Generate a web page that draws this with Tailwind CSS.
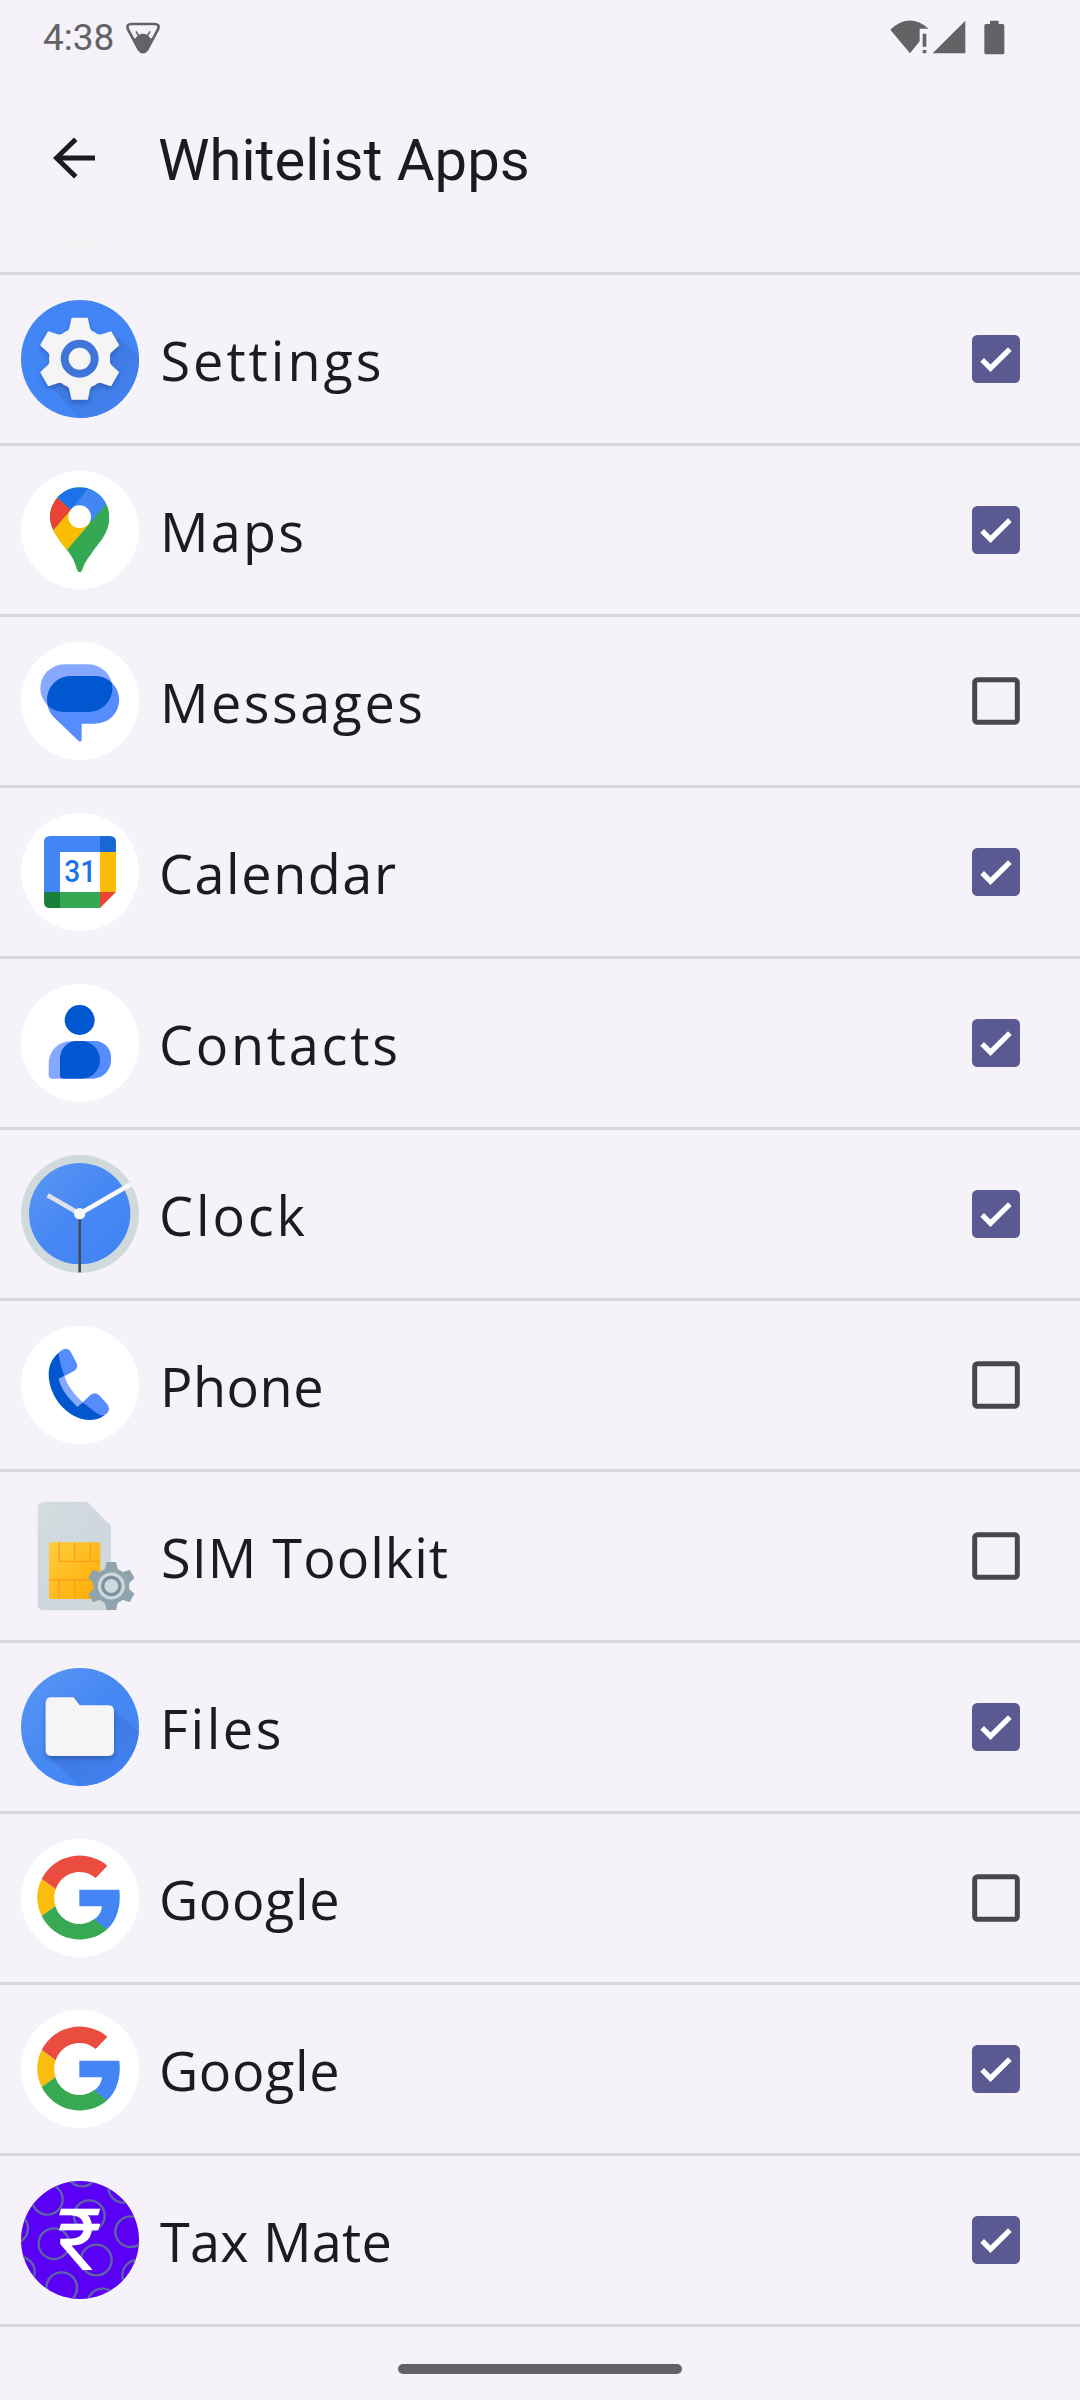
<!DOCTYPE html>
<html lang="en">
<head>
<meta charset="utf-8">
<title>Whitelist Apps</title>
<script src="https://cdn.jsdelivr.net/npm/@tailwindcss/browser@4"></script>
</head>
<body class="w-[1080px] h-[2400px] overflow-hidden bg-[#f5f2fa] font-['Open_Sans',sans-serif] text-[#1c1b21] flex flex-col">

<!-- shared shapes -->
<svg class="absolute size-0">
  <defs>
    <symbol id="on" viewBox="0 0 48 48">
      <rect width="48" height="48" rx="5.5" fill="#5b5992"/>
      <path d="M8.3 26.7 12 23l6.5 6.5L36 12.3l3.7 3.7-21.2 21z" fill="#fff"/>
    </symbol>
    <symbol id="off" viewBox="0 0 48 48">
      <rect x="2.7" y="2.7" width="42.6" height="42.6" rx="2.8" fill="none" stroke="#48464f" stroke-width="5"/>
    </symbol>
    <g id="tooth"><path d="M-25-120Q-25-123-22-123H22Q25-123 25-120L31-92Q34-81 50-77L0 0-50-77Q-34-81-31-92Z"/></g>
    <g id="gear">
      <circle r="91"/>
      <use href="#tooth"/><use href="#tooth" transform="rotate(60)"/><use href="#tooth" transform="rotate(120)"/>
      <use href="#tooth" transform="rotate(180)"/><use href="#tooth" transform="rotate(240)"/><use href="#tooth" transform="rotate(300)"/>
    </g>
    <filter id="drop" x="-20%" y="-20%" width="140%" height="150%"><feDropShadow dx="0" dy="8" stdDeviation="7" flood-color="#1a3a80" flood-opacity=".4"/></filter>
    <linearGradient id="blue" x1="0" y1="0" x2="1" y2="1"><stop offset="0" stop-color="#5a96f6"/><stop offset=".5" stop-color="#4688f3"/><stop offset="1" stop-color="#4083f6"/></linearGradient>
    <linearGradient id="shade" x1="0" y1="0" x2="1" y2="1"><stop offset=".4" stop-color="#3f7ae2"/><stop offset="1" stop-color="#4284f5"/></linearGradient>
    <linearGradient id="chip" x1="0" y1="0" x2="1" y2="1"><stop offset="0" stop-color="#ffcd40"/><stop offset="1" stop-color="#ffab00"/></linearGradient>
    <linearGradient id="card" x1="0" y1="0" x2="1" y2="1"><stop offset="0" stop-color="#d3dcde"/><stop offset=".45" stop-color="#d0d8df"/><stop offset="1" stop-color="#cfd8da"/></linearGradient>
    <clipPath id="pin"><path d="M150 741A89 89 0 0 1 328 741C328 788 300 815 280 842C262 867 254 877 247 899Q239 915 231 899C225 878 219 863 201 840C182 815 150 780 150 741Z"/></clipPath>
    <clipPath id="bubble"><rect x="121" y="163" width="216" height="143" rx="71.5"/></clipPath>
    <clipPath id="bodyClip"><path d="M146 375V340A67 67 0 0 1 213 273H243A57 57 0 0 1 300 330 56 56 0 0 1 244 386H157Q146 386 146 375Z"/></clipPath>
    <clipPath id="disc"><circle cx="240" cy="270" r="177"/></clipPath>
    <clipPath id="discB"><circle cx="240" cy="291" r="177"/></clipPath>
    <clipPath id="discA"><circle cx="240" cy="267" r="177"/></clipPath>
    <symbol id="g" viewBox="63 627 354 354">
      <circle cx="240" cy="804" r="177" fill="#fff"/>
      <path d="M125 747A128 128 0 0 1 322 707L287 744A75 75 0 0 0 167 778Z" fill="#eb4c40"/>
      <path d="M125 747A128 128 0 0 0 125 858L167 829A76 76 0 0 1 167 778Z" fill="#fbbd0d"/>
      <path d="M125 858A128 128 0 0 0 322 898L283 867A75 75 0 0 1 166 829Z" fill="#37a853"/>
      <path d="M238 779H358C364 828 350 873 321 898L282 868C296 860 304 846 306 829H238Z" fill="#4485f5"/>
    </symbol>
  </defs>
</svg>

<header class="h-[272px] shrink-0 relative font-['Roboto',sans-serif]">
  <div class="h-[75px] flex items-center pl-[43px] pr-[75px] text-[#636366]">
    <span class="text-[37px] leading-none">4:38</span>
    <svg class="ml-[12px] mt-px w-[34px] h-[32px]" viewBox="321 38 102 94">
      <path d="M336 43H408Q423 44 417 59L385 119Q372 136 359 119L327 59Q321 44 336 43Z" fill="none" stroke="#636366" stroke-width="8"/>
      <path d="M345 86H350Q356 72 372 72T394 86H399L385 119Q372 136 359 119Z" fill="#636366"/>
      <path d="M351 65 360 80M393 65 384 80" stroke="#636366" stroke-width="5"/>
    </svg>
    <svg class="ml-auto w-[115px] h-[35px]" viewBox="92 58 345 105" fill="#636366">
      <path d="M93 87Q150 34 208 84H181V122L152 158Z"/>
      <path d="M190 99h11v39h-11zM190 148h11v10h-11z"/>
      <path d="M220 158 318 60V158Z"/>
      <path d="M392 60h26v10h12q5 0 5 5v81q0 5-5 5h-50q-5 0-5-5V75q0-5 5-5h12z"/>
    </svg>
  </div>
  <div class="flex items-center h-[165px] pl-[53px]">
    <svg class="w-[42px] h-[42px]" viewBox="0 0 42 42"><path d="M42 18.500V23.500H9.500L24.500 38 21 41.500 0 21 21 .5 24.500 4 9.500 18.500Z" fill="#1c1b21"/></svg>
    <h1 class="ml-[63px] mt-[5px] text-[58px] leading-none">Whitelist Apps</h1>
  </div>
  <div class="absolute left-[57px] top-[242px] w-[46px] h-[5px] rounded-b-[50%] bg-[#f4f4f4]"></div>
</header>

<main class="shrink-0 border-b-3 border-[#d8d5dc] text-[54px] leading-none whitespace-nowrap">
  <div class="flex items-center h-[171px] border-t-3 border-[#d8d5dc] pl-[21px] pr-[60px]">
    <svg class="size-[118px]" viewBox="63 90 354 354">
      <circle cx="240" cy="267" r="177" fill="#4285f5"/>
      <path d="M354 200 430 270V450H245L145 342Z" fill="url(#shade)" clip-path="url(#discA)"/>
      <g filter="url(#drop)"><use href="#gear" transform="translate(239 266)" fill="#f5f5f5"/></g>
      <circle cx="239" cy="266" r="57" fill="#3f74d9"/><circle cx="239" cy="266" r="33" fill="#f5f5f5"/>
    </svg>
    <span class="ml-[21.500px] pt-[2px] tracking-[2.98px]">Settings</span>
    <svg class="ml-auto size-[48px]"><use href="#on"/></svg>
  </div>
  <div class="flex items-center h-[171px] border-t-3 border-[#d8d5dc] pl-[21px] pr-[60px]">
    <svg class="size-[118px]" viewBox="63 603 354 354">
      <circle cx="240" cy="780" r="177" fill="#fff"/>
      <g clip-path="url(#pin)">
        <rect x="140" y="640" width="200" height="280" fill="#34a853"/>
        <path d="M264 655 213 717 239 741 272 757 319 702 350 660V640H270Z" fill="#4285f5"/>
        <path d="M173 685 213 719 264 655V640H160Z" fill="#1a73e8"/>
        <path d="M173 685 213 719 160 781 130 790V680Z" fill="#ea4335"/>
        <path d="M160 781 213 719 272 757 201 840 130 840Z" fill="#fbbc04"/>
      </g>
      <circle cx="239" cy="740" r="34" fill="#fff"/>
    </svg>
    <span class="ml-[21px] pt-[2px] tracking-[2.2px]">Maps</span>
    <svg class="ml-auto size-[48px]"><use href="#on"/></svg>
  </div>
  <div class="flex items-center h-[171px] border-t-3 border-[#d8d5dc] pl-[21px] pr-[60px]">
    <svg class="size-[118px]" viewBox="63 96 354 354">
      <circle cx="240" cy="273" r="177" fill="#fff"/>
      <rect x="121" y="163" width="216" height="143" rx="71.500" fill="#86a9ff"/>
      <path d="M212 198H286A71.500 71.500 0 0 1 286 341H245V390Q242 398 235 392L160 320Q141 300 141 269A71.500 71.500 0 0 1 212 198Z" fill="#578cff"/>
      <g clip-path="url(#bubble)"><rect x="141" y="198" width="216" height="143" rx="71.500" fill="#0057cf"/></g>
    </svg>
    <span class="ml-[21px] pt-[2px] tracking-[2.45px]">Messages</span>
    <svg class="ml-auto size-[48px]"><use href="#off"/></svg>
  </div>
  <div class="flex items-center h-[171px] border-t-3 border-[#d8d5dc] pl-[21px] pr-[60px]">
    <svg class="size-[118px]" viewBox="63 609 354 354">
      <circle cx="240" cy="786" r="177" fill="#fff"/>
      <path d="M150 678H300V726H180V846H132V696Q132 678 150 678Z" fill="#4285f5"/>
      <path d="M300 678H330Q348 678 348 696V726H300Z" fill="#1967d2"/>
      <path d="M300 726H348V846H300Z" fill="#fbbc04"/>
      <path d="M300 846H348L300 894Z" fill="#ea4335"/>
      <path d="M180 846H300V894H180Z" fill="#34a853"/>
      <path d="M132 846H180V894H150Q132 894 132 876Z" fill="#188038"/>
      <text x="193" y="815" font-family="Roboto, sans-serif" font-size="92" font-weight="500" textLength="96" lengthAdjust="spacingAndGlyphs" fill="#1a73e8">31</text>
    </svg>
    <span class="ml-[20px] pt-[2px] tracking-[1.54px]">Calendar</span>
    <svg class="ml-auto size-[48px]"><use href="#on"/></svg>
  </div>
  <div class="flex items-center h-[171px] border-t-3 border-[#d8d5dc] pl-[21px] pr-[60px]">
    <svg class="size-[118px]" viewBox="63 102 354 354">
      <circle cx="240" cy="279" r="177" fill="#fff"/>
      <circle cx="239" cy="210" r="45" fill="#0057cf"/>
      <path d="M146 375V340A67 67 0 0 1 213 273H243A57 57 0 0 1 300 330 56 56 0 0 1 244 386H157Q146 386 146 375Z" fill="#86a9ff"/>
      <path d="M180 375V325A52 52 0 0 1 232 273H285A48 48 0 0 1 333 321V330A56 56 0 0 1 277 386H191Q180 386 180 375Z" fill="#578cff"/>
      <path d="M180 375V325A52 52 0 0 1 232 273H285A48 48 0 0 1 333 321V330A56 56 0 0 1 277 386H191Q180 386 180 375Z" fill="#0057cf" clip-path="url(#bodyClip)"/>
    </svg>
    <span class="ml-[20px] pt-[2px] tracking-[2.75px]">Contacts</span>
    <svg class="ml-auto size-[48px]"><use href="#on"/></svg>
  </div>
  <div class="flex items-center h-[171px] border-t-3 border-[#d8d5dc] pl-[21px] pr-[60px]">
    <svg class="size-[118px]" viewBox="63 615 354 354">
      <circle cx="240" cy="792" r="177" fill="#d0dadd"/>
      <circle cx="239" cy="791" r="152" fill="url(#blue)"/>
      <path d="M239 791 143 736" stroke="#e0e2e6" stroke-width="14"/>
      <path d="M239 791 392 703" stroke="#fafafa" stroke-width="14"/>
      <path d="M239 791V967" stroke="#484c58" stroke-width="8"/>
      <circle cx="239" cy="791" r="17" fill="#fafafa"/>
    </svg>
    <span class="ml-[20px] pt-[2px] tracking-[2.9px]">Clock</span>
    <svg class="ml-auto size-[48px]"><use href="#on"/></svg>
  </div>
  <div class="flex items-center h-[171px] border-t-3 border-[#d8d5dc] pl-[21px] pr-[60px]">
    <svg class="size-[118px]" viewBox="63 108 354 354">
      <circle cx="240" cy="285" r="177" fill="#fff"/>
      <path d="M176 188C155 205 146 230 146 252C146 322 205 390 270 390 290 390 303 384 314 376L248 337 232 350 176 267 194 258Z" fill="#0057cf"/>
      <path d="M176 267 194 258C200 285 225 315 248 337L232 350C205 325 185 300 176 267Z" fill="#86a9ff"/>
      <path d="M176 188Q186 177 196 176 208 176 213 187L230 220Q235 235 222 243L194 258Q178 220 176 188Z" fill="#578cff"/>
      <path d="M248 337 271 315Q285 304 297 315L322 343Q332 356 322 369 315 378 302 376Q290 372 248 337Z" fill="#578cff"/>
    </svg>
    <span class="ml-[21px] pt-[2px] tracking-[0.5px]">Phone</span>
    <svg class="ml-auto size-[48px]"><use href="#off"/></svg>
  </div>
  <div class="flex items-center h-[171px] border-t-3 border-[#d8d5dc] pl-[21px] pr-[60px]">
    <svg class="size-[118px]" viewBox="63 621 354 354">
      <path d="M133 635H262L333 707V961H133Q113 961 113 941V655Q113 635 133 635Z" fill="url(#card)"/>
      <rect x="147" y="757" width="154" height="170" rx="6" fill="url(#chip)"/>
      <path d="M177 757V814H300M224 757V814M271 757V814M147 870H280M177 870V926M224 870V926" fill="none" stroke="#f9a01b" stroke-width="4"/>
      <use href="#gear" transform="translate(334 888) scale(.585)" fill="#90a4ae"/>
      <circle cx="334" cy="888" r="36" fill="none" stroke="#cfd8dc" stroke-width="9"/>
      <circle cx="334" cy="888" r="25" fill="#cfd8dc" stroke="#78909c" stroke-width="8"/>
    </svg>
    <span class="ml-[22px] pt-[2px] tracking-[1.02px]">SIM Toolkit</span>
    <svg class="ml-auto size-[48px]"><use href="#off"/></svg>
  </div>
  <div class="flex items-center h-[171px] border-t-3 border-[#d8d5dc] pl-[21px] pr-[60px]">
    <svg class="size-[118px]" viewBox="63 114 354 354">
      <circle cx="240" cy="291" r="177" fill="url(#blue)"/>
      <path d="M338 236 430 315V480H250L142 374Z" fill="url(#shade)" clip-path="url(#discB)"/>
      <path d="M154 202H221L239 226H325Q342 226 342 243V361Q342 378 325 378H154Q137 378 137 361V219Q137 202 154 202Z" fill="#f5f5f5" filter="url(#drop)"/>
    </svg>
    <span class="ml-[21px] pt-[2px] tracking-[2.58px]">Files</span>
    <svg class="ml-auto size-[48px]"><use href="#on"/></svg>
  </div>
  <div class="flex items-center h-[171px] border-t-3 border-[#d8d5dc] pl-[21px] pr-[60px]">
    <svg class="size-[118px]"><use href="#g"/></svg>
    <span class="ml-[20px] pt-[2px] tracking-[0.6px]">Google</span>
    <svg class="ml-auto size-[48px]"><use href="#off"/></svg>
  </div>
  <div class="flex items-center h-[171px] border-t-3 border-[#d8d5dc] pl-[21px] pr-[60px]">
    <svg class="size-[118px]"><use href="#g"/></svg>
    <span class="ml-[20px] pt-[2px] tracking-[0.6px]">Google</span>
    <svg class="ml-auto size-[48px]"><use href="#on"/></svg>
  </div>
  <div class="flex items-center h-[171px] border-t-3 border-[#d8d5dc] pl-[21px] pr-[60px]">
    <svg class="size-[118px]" viewBox="63 93 354 354">
      <g clip-path="url(#disc)">
        <rect x="63" y="93" width="354" height="354" fill="#5a00f5"/>
        <g fill="none" stroke="#5d66a3" stroke-width="7">
          <circle cx="142" cy="148" r="46"/><circle cx="246" cy="63" r="46"/><circle cx="268" cy="197" r="46"/>
          <circle cx="371" cy="112" r="46"/><circle cx="392" cy="245" r="46"/><circle cx="38" cy="235" r="46"/>
          <circle cx="162" cy="281" r="46"/><circle cx="289" cy="330" r="46"/><circle cx="58" cy="366" r="46"/>
          <circle cx="413" cy="376" r="46"/><circle cx="185" cy="413" r="46"/><circle cx="308" cy="462" r="46"/>
        </g>
      </g>
      <text x="172" y="361" font-family="Roboto, sans-serif" font-size="259" textLength="134" lengthAdjust="spacingAndGlyphs" fill="#fff">₹</text>
    </svg>
    <span class="ml-[21px] pt-[2px] tracking-[0.22px]">Tax Mate</span>
    <svg class="ml-auto size-[48px]"><use href="#on"/></svg>
  </div>
</main>

<footer class="flex justify-center pt-[37px]">
  <div class="w-[284px] h-[10px] rounded-full bg-[#636366]"></div>
</footer>
</body>
</html>
